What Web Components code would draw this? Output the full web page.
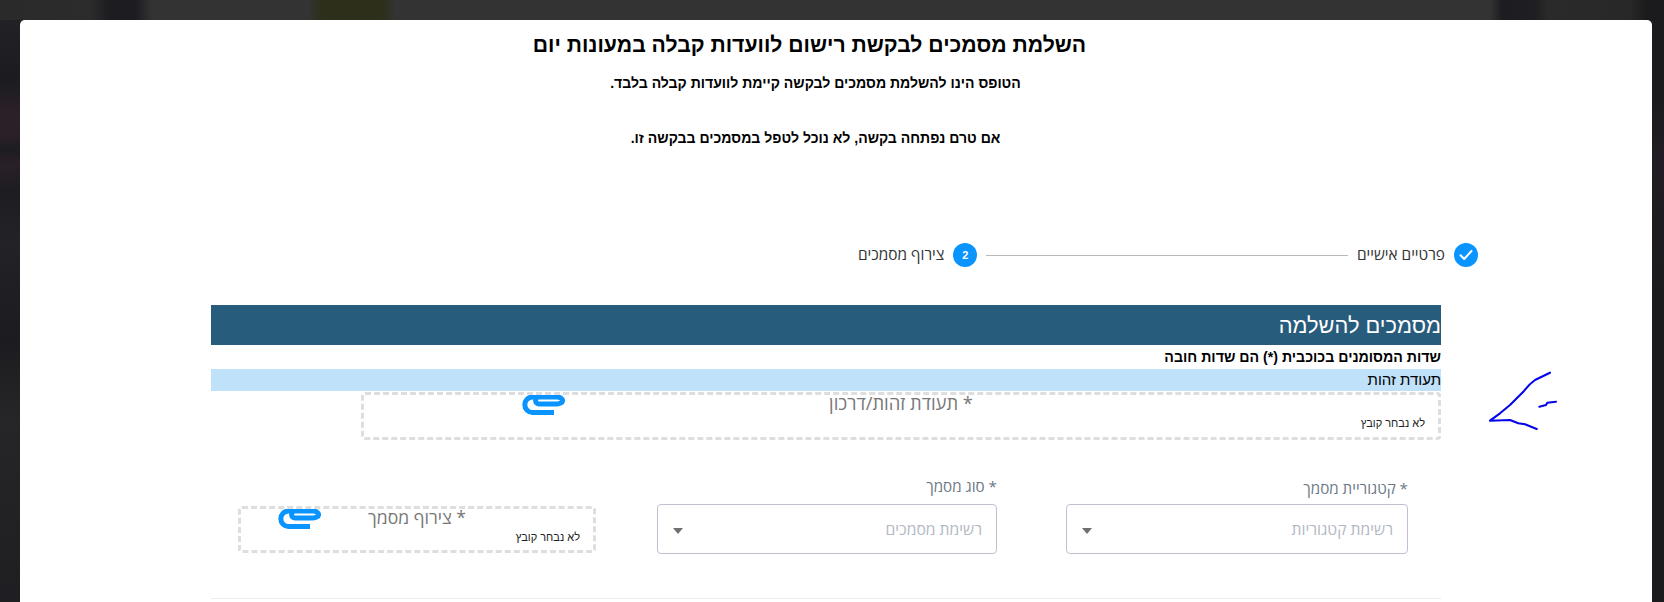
<!DOCTYPE html>
<html lang="he" dir="rtl"><head><meta charset="utf-8"><title>השלמת מסמכים</title>
<style>
html,body{margin:0;height:602px;overflow:hidden}
body{background:
 linear-gradient(180deg,#222226 0,#1c1c20 60px,#2a2027 90px,#2a2027 115px,#1d1d21 130px,#2a2027 145px,#1d1d21 170px,#232327 220px,#1c1c20 320px,#262628 400px,#1e1e22 602px) no-repeat 0 20px/20px 582px,
 linear-gradient(180deg,#1b1b1d 0,#1b1b1d 100px,#221d24 160px,#1b1b1d 300px) no-repeat 100% 0/12px 602px,
 linear-gradient(90deg,#2a2a2a 0,#2c2c2c 90px,#1c1c21 110px,#1c1c21 135px,#333 152px,#333 308px,#2e2f1a 322px,#2e2f1a 382px,#333 396px,#333 1490px,#1d1d21 1502px,#1f1f23 1535px,#2a2a2a 1548px,#282828 1630px,#1b1b1d 1646px);font-family:"Liberation Sans",Arial,sans-serif;}
</style></head><body>
<app-page>
  <app-modal>
    <form-intro title-text="השלמת מסמכים לבקשת רישום לוועדות קבלה במעונות יום">
      <p>הטופס הינו להשלמת מסמכים לבקשה קיימת לוועדות קבלה בלבד.</p>
      <p>אם טרם נפתחה בקשה, לא נוכל לטפל במסמכים בבקשה זו.</p>
    </form-intro>
    <step-bar></step-bar>
    <section-title>מסמכים להשלמה</section-title>
    <required-note>שדות המסומנים בכוכבית (*) הם שדות חובה</required-note>
    <group-bar>תעודת זהות</group-bar>
    <file-box style="--w:1080px;--h:48px;--file-w:465px;--label-w:144px;--clip-gap:264px;--label-size:18.4px" label="* תעודת זהות/דרכון"></file-box>
    <doc-row>
      <select-field style="--w:342px" label="* קטגוריית מסמך" placeholder="רשימת קטגוריות"></select-field>
      <select-field style="--w:340px;--label-shift:-2px" label="* סוג מסמך" placeholder="רשימת מסמכים"></select-field>
      <file-box class="small" style="--w:358px;--h:47px;--file-w:127px;--label-w:98px;--clip-gap:47px;--label-size:17.6px" label="* צירוף מסמך"></file-box>
    </doc-row>
    <form-rule></form-rule>
  </app-modal>
</app-page>
<script>
function def(name, css, html){
  customElements.define(name, class extends HTMLElement{
    connectedCallback(){
      if(this.shadowRoot) return;
      const r=this.attachShadow({mode:'open'});
      const get=a=>(this.getAttribute(a)||'');
      r.innerHTML='<style>'+css+'</style>'+(typeof html==='function'?html(get):html);
    }
  });
}
def('app-page',':host{display:block;padding:20px 12px 0 20px;height:582px}','<slot></slot>');
def('app-modal',`:host{display:block;position:relative;height:582px;overflow:hidden;background:#fff;border-radius:5px 5px 0 0;padding:0 211px 0 191px;color:#000}
 svg{position:absolute;left:0;top:0;pointer-events:none}`,
 `<slot></slot><svg width="1632" height="582" fill="none" stroke="#0505e8" stroke-width="2.1" stroke-linecap="round" stroke-linejoin="round"><path d="M1530 352.7 1515 360C1508 365 1505 370 1503.3 371.7L1490 385 1480 393.3 1470 400.7 1490 400 1498.3 403.3 1505 404.3 1516.7 409"/><path d="M1519.3 386.7 1526 385 1527.3 382.7 1536 381.7"/></svg>`);
def('form-intro',`:host{display:block;text-align:center;padding-top:10px}
 h1{margin:0;padding-right:33px;font-size:21.2px;line-height:30px;font-weight:700}
 ::slotted(p){margin:0 0 31px;padding-right:21px;font-size:14.05px;line-height:24px;font-weight:700}
 .b{padding-top:11px}`,
 g=>`<h1>${g('title-text')}</h1><div class="b"><slot></slot></div>`);
def('step-bar',`:host{display:flex;align-items:center;width:620px;height:24px;margin:93px -37px 38px 0;font-family:"Open Sans","Liberation Sans",sans-serif;font-size:15.4px;color:#333}
 .c{flex:none;width:24px;height:24px;border-radius:50%;background:#0a94ff;color:#fff;display:flex;align-items:center;justify-content:center;font:700 11px "Liberation Sans",sans-serif}
 .t{flex:none;margin:0 9px;line-height:24px;white-space:nowrap}
 .t.e{margin-left:0}
 .l{flex:1;height:1px;background:#b9b9b9}`,
 `<span class="c"><svg width="14" height="12" viewBox="0 0 14 12" fill="none" stroke="#fff" stroke-width="2" stroke-linecap="round" stroke-linejoin="round"><path d="M1.5 6.2 5.2 10 12.5 2"/></svg></span><span class="t">פרטיים אישיים</span><span class="l"></span><span class="c" style="margin-right:9px">2</span><span class="t e">צירוף מסמכים</span>`);
def('section-title',`:host{display:block;height:40px;line-height:41px;background:#285c7d;color:#fff;font-size:21.8px;font-weight:400;overflow:hidden}`,'<slot></slot>');
def('required-note',`:host{display:block;height:24px;line-height:25px;font-size:14.2px;font-weight:700;color:#000}`,'<slot></slot>');
def('group-bar',`:host{display:block;height:22px;line-height:22px;background:#bfe1fa;font-size:15px;color:#000;margin-bottom:1px}`,'<slot></slot>');
const clip=`<svg class="clip" width="43" height="20" viewBox="0 0 43 20" fill="none" stroke="#0a94ff" stroke-width="5"><path d="M32 17.4H10.5A7.7 7.7 0 0 1 10.5 2H35A5.5 3.4 0 0 1 35 8.9H17A3.4 3.4 0 0 1 17 2"/></svg>`;
def('file-box',`:host{display:block;box-sizing:border-box;width:var(--w);height:var(--h);margin:0;border:3px dashed #dedede;border-radius:4px;background:#fff}
 .r{display:flex;height:100%;align-items:flex-start}
 .f{flex:none;box-sizing:border-box;width:var(--file-w);padding:20px 13px 0 0;font:11px/16px "Liberation Sans",sans-serif;color:#222;white-space:nowrap}
 .lab{flex:none;width:var(--label-w);font:var(--label-size)/16px "Open Sans","Liberation Sans",sans-serif;color:#777;white-space:nowrap}
 .clip{flex:none;display:block;margin-right:var(--clip-gap)}`,
 g=>`<div class="r"><span class="f">לא נבחר קובץ</span><span class="lab">${g('label')}</span>${clip}</div>`);
def('doc-row',`:host{display:flex;align-items:flex-start;margin:36px 33px 0 0}
 ::slotted(select-field:first-child){margin-left:69px}
 ::slotted(select-field:nth-child(2)){margin-left:61px}
 ::slotted(file-box){margin-top:30px}`,'<slot></slot>');
def('select-field',`:host{display:block;flex:none;width:var(--w)}
 label{display:block;height:28px;margin-top:var(--label-shift,0);margin-bottom:calc(0px - var(--label-shift,0px));font:15.2px/24px "Open Sans","Liberation Sans",sans-serif;color:#6d7886}
 .s{box-sizing:border-box;height:50px;border:1px solid #c3bfd3;border-radius:4px;display:flex;align-items:center;justify-content:space-between;padding:0 14px 0 15px;font:15.7px "Open Sans","Liberation Sans",sans-serif;color:#b3b8c3}
 i{width:0;height:0;border:5px solid transparent;border-top:6px solid #707070;border-bottom:0;margin-top:4px}`,
 g=>`<label>${g('label')}</label><div class="s"><span>${g('placeholder')}</span><i></i></div>`);
def('form-rule',`:host{display:block;height:1px;background:#ececec;margin-top:44px}`,'');
</script>
</body></html>
